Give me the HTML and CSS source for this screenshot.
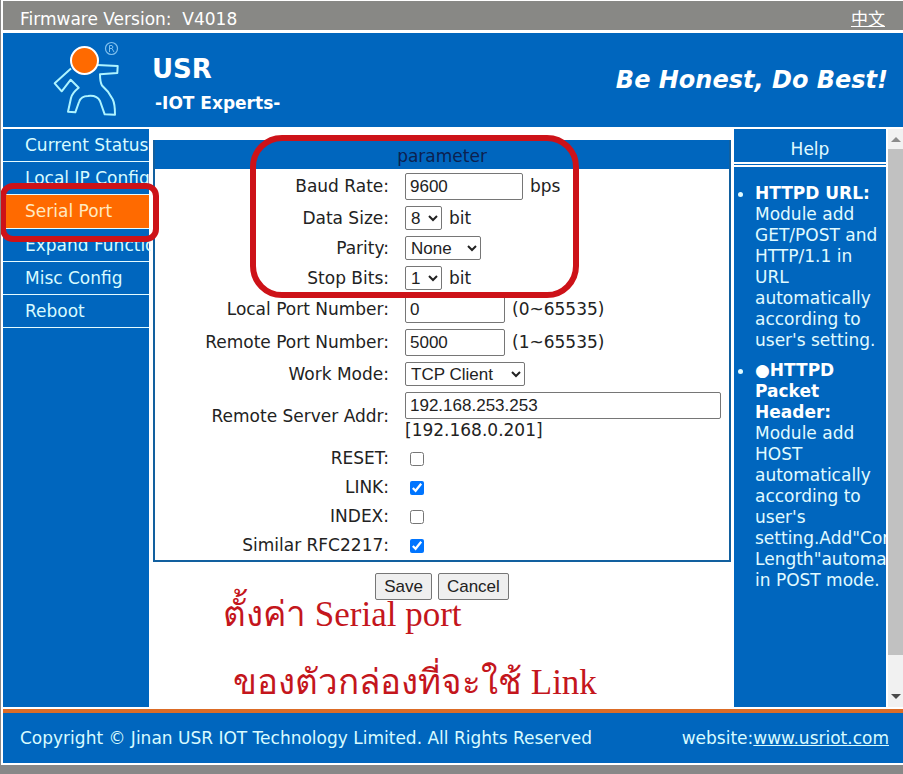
FILE: index.html
```html
<!DOCTYPE html>
<html lang="en">
<head>
<meta charset="utf-8">
<title>USR IOT - Serial Port</title>
<link rel="stylesheet" href="styles.css">
</head>
<body>
<div class="page">
  <div class="topbar">
    <span class="firmware">Firmware Version:&nbsp; V4018</span>
    <a class="language" href="#" lang="zh">中文</a>
  </div>
  <header class="banner">
    <svg class="logo" viewBox="0 0 70 80" aria-hidden="true">
      <g fill="none" stroke="#aef4ff" stroke-width="2" stroke-linejoin="round">
        <path d="M19 28.500 L2.700 43.300 L9.700 51.300 L18.700 39.700 L26.700 47.700 Q20 53 19 58 L16 71.700 L23.300 72.300 L27 62 Q29 56 36 56 Q45 55 48 61 L52.700 74.300 L63 74.700 Q63 64 60.700 59.300 L56 51.700 L50 45.500 Q48 42 48 34.300 L65.300 33 L65.700 26 L45 25"/>
        <circle cx="59.500" cy="8.500" r="6" stroke="#7fc0ee" stroke-width="1.200"/>
        <path d="M57.500 12 V5.500 H60 Q62 7 60 8.500 H57.500 M60 8.500 L62 12" stroke="#7fc0ee" stroke-width="1"/>
      </g>
      <circle cx="32.500" cy="20.500" r="13.500" fill="#ff6a00" stroke="#fff" stroke-width="2"/>
    </svg>
    <div class="brand">
      <h1>USR</h1>
      <p>-IOT Experts-</p>
    </div>
    <p class="slogan">Be Honest, Do Best!</p>
  </header>
  <div class="columns">
    <nav class="menu">
      <a href="#">Current Status</a>
      <a href="#">Local IP Config</a>
      <a href="#" class="active" aria-current="page">Serial Port</a>
      <a href="#">Expand Function</a>
      <a href="#">Misc Config</a>
      <a href="#">Reboot</a>
      <span class="mark mark-menu"></span>
    </nav>
    <main class="content">
      <form>
        <div class="panel">
          <h2>parameter</h2>
          <div class="row tall"><label for="baud">Baud Rate:</label><div><input class="w-baud" id="baud" type="text" value="9600"> bps</div></div>
          <div class="row"><label for="size">Data Size:</label><div><select class="w-digit" id="size"><option>8</option></select> bit</div></div>
          <div class="row"><label for="parity">Parity:</label><div><select class="w-parity" id="parity"><option>None</option></select></div></div>
          <div class="row"><label for="stop">Stop Bits:</label><div><select class="w-digit" id="stop"><option>1</option></select> bit</div></div>
          <div class="row tall"><label for="lport">Local Port Number:</label><div><input class="w-port" id="lport" type="text" value="0"> (0~65535)</div></div>
          <div class="row tall"><label for="rport">Remote Port Number:</label><div><input class="w-port" id="rport" type="text" value="5000"> (1~65535)</div></div>
          <div class="row"><label for="mode">Work Mode:</label><div><select class="w-mode" id="mode"><option>TCP Client</option></select></div></div>
          <div class="row double"><label for="addr">Remote Server Addr:</label><div><input class="w-addr" id="addr" type="text" value="192.168.253.253"><span class="hint">[192.168.0.201]</span></div></div>
          <div class="row check"><label for="reset">RESET:</label><div><input id="reset" type="checkbox"></div></div>
          <div class="row check"><label for="link">LINK:</label><div><input id="link" type="checkbox" checked></div></div>
          <div class="row check"><label for="index">INDEX:</label><div><input id="index" type="checkbox"></div></div>
          <div class="row check"><label for="rfc">Similar RFC2217:</label><div><input id="rfc" type="checkbox" checked></div></div>
          <span class="mark mark-panel"></span>
        </div>
        <div class="actions">
          <button type="button">Save</button>
          <button type="button">Cancel</button>
          <p class="note note-first" lang="th">ตั้งค่า Serial port</p>
          <p class="note note-second" lang="th">ของตัวกล่องที่จะใช้ Link</p>
        </div>
      </form>
    </main>
    <aside class="help">
      <h2>Help</h2>
      <ul>
        <li><b>HTTPD URL:</b><br>Module add GET/POST and HTTP/1.1 in URL automatically according to user's setting.</li>
        <li><b>●HTTPD Packet Header:</b><br>Module add HOST automatically according to user's setting.Add"Content-Length"automatically in POST mode.</li>
      </ul>
    </aside>
    <div class="scrollbar" aria-hidden="true">
      <svg viewBox="0 0 16 20"><path d="M3 13 L8 8 L13 13 Z" fill="#8b8b8b"/></svg>
      <div class="track"><div class="thumb"></div></div>
      <svg viewBox="0 0 16 20"><path d="M3 7 L8 12 L13 7 Z" fill="#4a4a4a"/></svg>
    </div>
  </div>
  <footer class="footer">
    <span>Copyright © Jinan USR IOT Technology Limited. All Rights Reserved</span>
    <span>website:<a href="#">www.usriot.com</a></span>
  </footer>
</div>
</body>
</html>
```
FILE: styles.css
```css
* { box-sizing: border-box; }

body {
  margin: 0;
  background: #888;
  font: 17px/21px "DejaVu Sans", Verdana, sans-serif;
  color: #222;
}

h1, h2, p, ul { margin: 0; padding: 0; }

.page {
  display: flex;
  flex-direction: column;
  min-height: calc(100vh - 9px);
  margin-left: 1px;
  padding: 1px 0 2px 2px;
  background: #fff;
  overflow: hidden;
}

.topbar {
  display: flex;
  justify-content: space-between;
  padding: 8px 18px 0 17px;
  height: 29px;
  background: #888885;
  color: #fff;
}

.language {
  color: #fff;
  font-family: "DejaVu Sans", "Noto Sans CJK SC", sans-serif;
}

.banner {
  display: flex;
  align-items: center;
  height: 94px;
  margin: 3px 0 2px;
  padding: 0 15px 0 49px;
  background: #0066be;
  color: #fff;
  font-weight: bold;
}

.logo { width: 70px; height: 80px; margin-right: 30px; }

.brand { padding-top: 6px; }
.brand h1 { font-size: 26px; line-height: 32px; }
.brand p { margin: 8px 0 0 3px; }

.slogan {
  margin-left: auto;
  font-size: 24px;
  font-style: italic;
}

.columns {
  flex: 1;
  display: grid;
  grid-template-columns: 146px minmax(0, 1fr) 152px 17px;
  min-height: 578px;
}

.menu {
  position: relative;
  margin-bottom: 2px;
  background: #0066be;
}

.menu a {
  display: block;
  width: 148px;
  height: 33px;
  padding: 6px 0 0 22px;
  overflow: hidden;
  white-space: nowrap;
  color: #d8fbff;
  text-decoration: none;
  background: linear-gradient(#e4fbff, #e4fbff) left bottom / 146px 1px no-repeat;
}

.menu a.active {
  height: 34px;
  background-image: linear-gradient(#e4fbff, #e4fbff), linear-gradient(#ff6a00, #ff6a00);
  background-size: 146px 1px, 146px 34px;
  color: #ffe9c0;
}

.mark {
  position: absolute;
  border: 6px solid #cd1218;
  pointer-events: none;
}

.mark-menu {
  top: 54px;
  left: -3px;
  width: 159px;
  height: 59px;
  border-radius: 13px;
  z-index: 1;
}

.content { padding: 11px 3px 0 4px; }

.panel {
  position: relative;
  border: 2px solid #12609f;
  border-top: 0;
}

.panel h2 {
  padding-top: 6px;
  height: 30px;
  background: linear-gradient(#0066be, #0066be) top / 100% 29px no-repeat;
  color: #0c2150;
  font-size: 17px;
  font-weight: normal;
  text-align: center;
}

.row {
  display: grid;
  grid-template-columns: 234px minmax(0, 1fr);
  align-items: center;
  column-gap: 16px;
  min-height: 30px;
}

.row.tall { min-height: 33px; }
.row.double { min-height: 55px; }
.row.check { min-height: 29px; }
.row label { text-align: right; }

.row > div {
  display: flex;
  flex-wrap: wrap;
  align-items: center;
  column-gap: 7px;
}

input[type="text"], select, button {
  margin: 0;
  border: 1px solid #767676;
  border-radius: 2px;
  font: 17px "Liberation Sans", Arial, sans-serif;
  color: #222;
}

input[type="text"] { height: 27px; padding: 1px 4px; background: #fff; }
select { height: 24px; padding: 0 0 0 1px; background: #fff; }
input[type="checkbox"] { width: 14px; height: 14px; margin: 0 5px; }

.w-baud { width: 118px; }
.w-port { width: 100px; }
.w-digit { width: 37px; }
.w-parity { width: 76px; }
.w-mode { width: 120px; }
.w-addr { width: 316px; max-width: 100%; }
.hint { flex-basis: 100%; margin-top: 1px; }

.mark-panel {
  top: -5px;
  left: 95px;
  width: 329px;
  height: 163px;
  border-radius: 32px;
}

.actions {
  position: relative;
  display: flex;
  justify-content: center;
  gap: 6px;
  padding-top: 11px;
}

button { height: 27px; padding: 0 8px; background: #efefef; }

.note {
  position: absolute;
  font: 35px/40px "Liberation Serif", "Times New Roman", serif;
  color: #c4161c;
  white-space: nowrap;
}

.note-first { top: 33px; left: 70px; }
.note-second { top: 101px; left: 80px; }

.help {
  overflow: hidden;
  margin-bottom: 2px;
  background: #0066be;
  color: #e0fbff;
}

.help h2 {
  height: 38px;
  padding-top: 10px;
  border-bottom: 5px double #fff;
  font-size: 17px;
  font-weight: normal;
  text-align: center;
}

.help ul { padding: 16px 0 0 21px; }
.help li { margin-bottom: 9px; }
.help li b { color: #fff; }

.scrollbar {
  display: flex;
  flex-direction: column;
  margin: 0 0 2px 2px;
  background: #f1f1f1;
}

.scrollbar svg { width: 16px; height: 20px; }
.track { flex: 1; }
.thumb { height: 94%; background: #c1c1c1; }

.footer {
  display: flex;
  align-items: center;
  justify-content: space-between;
  height: 54px;
  padding: 0 14px 0 17px;
  border-top: 4px solid #dc6c26;
  background: #0066be;
  color: #d8fbff;
}

.footer a { color: inherit; }
```
